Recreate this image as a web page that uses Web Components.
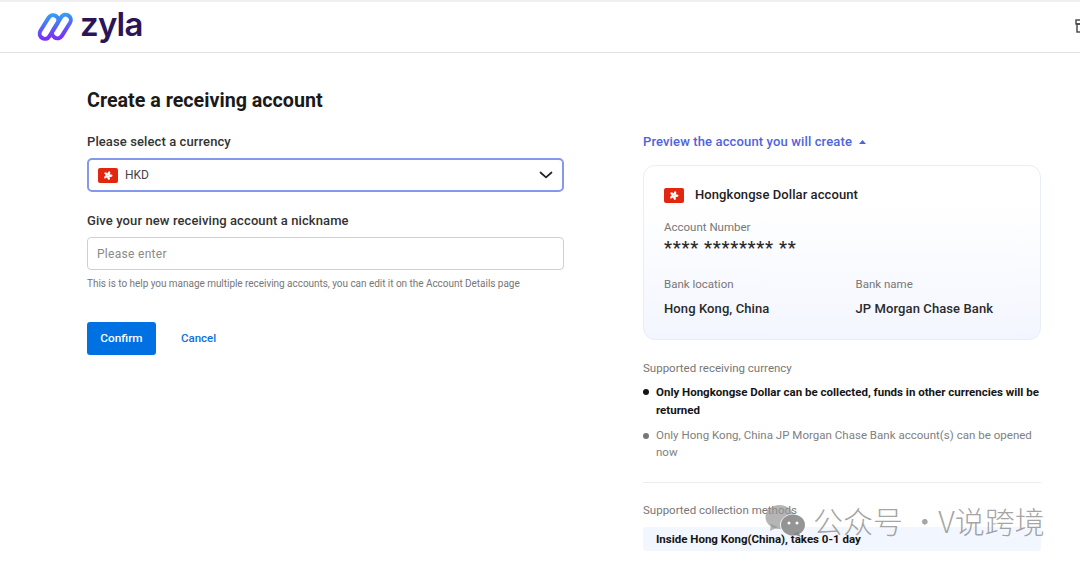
<!DOCTYPE html>
<html lang="en">
<head>
<meta charset="utf-8">
<title>Create a receiving account</title>
<style>
  html, body { margin: 0; height: 564px; overflow: hidden; background: #fff; }
  body { font-family: Roboto, "Liberation Sans", sans-serif; color: #1a1a1a; }
</style>
</head>
<body>
<zyla-page>
  <zyla-header slot="header"></zyla-header>
  <create-form slot="left"></create-form>
  <account-preview slot="right"></account-preview>
</zyla-page>
<wx-mark></wx-mark>

<script>
const flagSvg = `
  <svg width="20" height="15" viewBox="0 0 20 15" style="display:block">
    <rect width="20" height="15" rx="2" fill="#e3260f"/>
    <g fill="#fff" transform="translate(10 7.5)">
      <ellipse cx=".5" cy="-2.300" rx="1.250" ry="2.200" transform="rotate(12)"/>
      <ellipse cx=".5" cy="-2.300" rx="1.250" ry="2.200" transform="rotate(84)"/>
      <ellipse cx=".5" cy="-2.300" rx="1.250" ry="2.200" transform="rotate(156)"/>
      <ellipse cx=".5" cy="-2.300" rx="1.250" ry="2.200" transform="rotate(228)"/>
      <ellipse cx=".5" cy="-2.300" rx="1.250" ry="2.200" transform="rotate(300)"/>
    </g>
  </svg>`

class ZylaPage extends HTMLElement {
  constructor () {
    super()
    this.attachShadow({ mode: 'open' })
  }

  connectedCallback () {
    this.shadowRoot.innerHTML = `
      <style>
      :host { display: block; }
      main {
        display: grid;
        grid-template-columns: 477px 398px;
        column-gap: 79px;
        padding: 0 0 0 87px;
      }
      </style>
      <slot name="header"></slot>
      <main>
        <slot name="left"></slot>
        <slot name="right"></slot>
      </main>
      `
  }
}
window.customElements.define('zyla-page', ZylaPage)

class ZylaHeader extends HTMLElement {
  constructor () {
    super()
    this.attachShadow({ mode: 'open' })
  }

  connectedCallback () {
    this.shadowRoot.innerHTML = `
      <style>
      :host {
        display: flex;
        align-items: center;
        box-sizing: border-box;
        height: 53px;
        padding: 0 0 0 37px;
        border-top: 2px solid #efefef;
        border-bottom: 1px solid #e2e2e2;
        position: relative;
        overflow: hidden;
      }
      .word {
        font: 600 33px/1 Inter, sans-serif;
        color: #2a1559;
        letter-spacing: -0.8px;
        margin: -5px 0 0 6px;
      }
      .logo { display: block; }
      .box { position: absolute; left: 1075px; top: 16px; }
      </style>
      <svg class="logo" width="37" height="30" viewBox="0 0 37 30" fill="none">
        <defs>
          <linearGradient id="lg" x1="3" y1="29" x2="34" y2="1" gradientUnits="userSpaceOnUse">
            <stop offset="0" stop-color="#8a1cf5"/>
            <stop offset=".3" stop-color="#6a48f6"/>
            <stop offset=".62" stop-color="#3a8ff6"/>
            <stop offset="1" stop-color="#1fe0f8"/>
          </linearGradient>
        </defs>
        <g stroke="url(#lg)" stroke-width="4">
          <rect x="-13" y="-5.250" width="26" height="10.500" rx="5.250" transform="translate(12 15) rotate(-58)"/>
          <rect x="-13" y="-5.250" width="26" height="10.500" rx="5.250" transform="translate(24.500 14.500) rotate(-58)"/>
        </g>
      </svg>
      <span class="word">zyla</span>
      <svg class="box" width="10" height="16" viewBox="0 0 10 16" fill="none" stroke="#444" stroke-width="1.400">
        <rect x="1" y="2" width="12" height="4"/>
        <rect x="2" y="6" width="10" height="8"/>
      </svg>
      `
  }
}
window.customElements.define('zyla-header', ZylaHeader)

class CreateForm extends HTMLElement {
  constructor () {
    super()
    this.attachShadow({ mode: 'open' })
  }

  connectedCallback () {
    this.shadowRoot.innerHTML = `
      <style>
      :host { display: block; padding-top: 36px; }
      h1 {
        margin: 0 0 20px;
        font: 700 19.700px/24px Roboto, sans-serif;
        color: #1a1a1a;
      }
      label {
        display: block;
        font: 500 13px/18px Roboto, sans-serif;
        color: #333;
        letter-spacing: .1px;
      }
      .select {
        display: flex;
        align-items: center;
        gap: 7px;
        box-sizing: border-box;
        height: 34px;
        margin: 7px 0 20px;
        padding: 0 9px;
        border: 2px solid #8499ee;
        border-radius: 5px;
        font: 400 12px Roboto, sans-serif;
        color: #444;
      }
      .select span { flex: 1; }
      .input {
        box-sizing: border-box;
        height: 33px;
        margin-top: 7px;
        padding: 0 9px;
        display: flex;
        align-items: center;
        border: 1px solid #d0d0d0;
        border-radius: 4px;
        font: 400 12px Roboto, sans-serif;
        letter-spacing: .3px;
        color: #8a8a8a;
      }
      .hint {
        margin: 7px 0 32px;
        font: 400 10px/13px Roboto, sans-serif;
        color: #777;
        letter-spacing: -.04px;
      }
      .actions { display: flex; align-items: center; gap: 25px; }
      .confirm {
        box-sizing: border-box;
        width: 69px;
        height: 33px;
        padding-bottom: 1px;
        display: flex;
        align-items: center;
        justify-content: center;
        background: #0071e3;
        border-radius: 3px;
        color: #fff;
        font: 500 11.800px Roboto, sans-serif;
      }
      .cancel { font: 500 11.500px Roboto, sans-serif; color: #0f6fde; margin-top: -1px; }
      </style>
      <h1>Create a receiving account</h1>
      <label>Please select a currency</label>
      <div class="select">
        ${flagSvg}
        <span>HKD</span>
        <svg width="14" height="8" viewBox="0 0 14 8" fill="none" stroke="#222" stroke-width="1.700" stroke-linecap="round" stroke-linejoin="round"><path d="M1.500 1.500 L7 6.300 L12.500 1.500"/></svg>
      </div>
      <label>Give your new receiving account a nickname</label>
      <div class="input">Please enter</div>
      <div class="hint">This is to help you manage multiple receiving accounts, you can edit it on the Account Details page</div>
      <div class="actions">
        <div class="confirm">Confirm</div>
        <div class="cancel">Cancel</div>
      </div>
      `
  }
}
window.customElements.define('create-form', CreateForm)

class AccountPreview extends HTMLElement {
  constructor () {
    super()
    this.attachShadow({ mode: 'open' })
  }

  connectedCallback () {
    this.shadowRoot.innerHTML = `
      <style>
      :host { display: block; padding-top: 80px; font-family: Roboto, sans-serif; }
      .toggle {
        display: flex;
        align-items: center;
        gap: 7px;
        font: 500 13px/18px Roboto, sans-serif;
        color: #4f63de;
        letter-spacing: .13px;
        margin-bottom: 14px;
      }
      .card {
        box-sizing: border-box;
        height: 175px;
        padding: 20px 20px 0;
        border: 1px solid #e9edf5;
        border-radius: 12px;
        background: linear-gradient(180deg, #fff 20%, #f3f6fe 100%);
      }
      .title {
        display: flex;
        align-items: center;
        gap: 11px;
        font: 500 13px/18px Roboto, sans-serif;
        color: #222;
        letter-spacing: .08px;
        margin-bottom: 15px;
      }
      .lbl { font: 400 11.500px/16px Roboto, sans-serif; color: #777; }
      .num {
        font: 500 18px/18px Roboto, sans-serif;
        color: #2a2a2a;
        margin: 4px 0 19px;
        letter-spacing: .73px;
        height: 18px;
      }
      .cols { display: grid; grid-template-columns: 191.500px 1fr; }
      .val {
        font: 500 13px/18px Roboto, sans-serif;
        color: #2a2a2a;
        margin-top: 8px;
        letter-spacing: .1px;
      }
      .head { font: 400 11.500px/16px Roboto, sans-serif; color: #777; margin-top: 20px; }
      ul { list-style: none; margin: 7px 0 0; padding: 0; }
      li {
        position: relative;
        padding-left: 13px;
        font: 400 11.500px/17px Roboto, sans-serif;
        letter-spacing: .02px;
        color: #808080;
        margin-bottom: 7px;
      }
      li::before {
        content: "";
        position: absolute;
        left: 0;
        top: 6px;
        width: 6px;
        height: 6px;
        border-radius: 50%;
        background: #777;
      }
      li.on { font-weight: 700; line-height: 18px; color: #151515; letter-spacing: 0; margin-bottom: 8px; }
      li.on::before { background: #151515; }
      hr { border: 0; border-top: 1px solid #ececec; margin: 21px 0 0; }
      hr + .head { margin-top: 19px; }
      .chip {
        margin-top: 9px;
        height: 24px;
        display: flex;
        align-items: center;
        padding-left: 13px;
        background: #f2f6fe;
        border-radius: 3px;
        font: 700 11.500px Roboto, sans-serif;
        color: #151515;
      }
      </style>
      <div class="toggle">Preview the account you will create
        <svg width="7" height="4" viewBox="0 0 7 4"><path d="M3.500 0 L7 4 L0 4 Z" fill="#4f63de"/></svg>
      </div>
      <div class="card">
        <div class="title">${flagSvg}<span>Hongkongse Dollar account</span></div>
        <div class="lbl">Account Number</div>
        <div class="num">**** ******** **</div>
        <div class="cols">
          <div><div class="lbl">Bank location</div><div class="val">Hong Kong, China</div></div>
          <div><div class="lbl">Bank name</div><div class="val">JP Morgan Chase Bank</div></div>
        </div>
      </div>
      <div class="head">Supported receiving currency</div>
      <ul>
        <li class="on">Only Hongkongse Dollar can be collected, funds in other currencies will be returned</li>
        <li>Only Hong Kong, China JP Morgan Chase Bank account(s) can be opened now</li>
      </ul>
      <hr>
      <div class="head">Supported collection methods</div>
      <div class="chip">Inside Hong Kong(China), takes 0-1 day</div>
      `
  }
}
window.customElements.define('account-preview', AccountPreview)

class WxMark extends HTMLElement {
  constructor () {
    super()
    this.attachShadow({ mode: 'open' })
  }

  connectedCallback () {
    this.shadowRoot.innerHTML = `
      <style>
      :host {
        position: absolute;
        left: 765px;
        top: 502px;
        display: flex;
        align-items: center;
        gap: 6px;
        height: 36px;
        white-space: nowrap;
        font: 300 30px/36px "Noto Sans CJK SC", sans-serif;
        color: rgba(130, 130, 130, .72);
      }
      svg { display: block; }
      .tail { margin-left: -8px; }
      </style>
      <svg width="42" height="33" viewBox="0 0 42 33">
        <ellipse cx="14.500" cy="13" rx="14" ry="12" fill="rgba(150,150,150,.7)"/>
        <path d="M6 20 L5 27 L13 23 Z" fill="rgba(150,150,150,.7)"/>
        <ellipse cx="28" cy="21" rx="13" ry="11" fill="rgba(255,255,255,.8)"/>
        <ellipse cx="28" cy="21" rx="12" ry="10.500" fill="rgba(130,130,130,.85)"/>
        <path d="M33 28 L36 33 L28 30 Z" fill="rgba(130,130,130,.85)"/>
        <circle cx="24" cy="19" r="1.500" fill="#fff"/>
        <circle cx="32" cy="19" r="1.500" fill="#fff"/>
      </svg>
      <span>公众号 · <span class="tail">V说跨境</span></span>
      `
  }
}
window.customElements.define('wx-mark', WxMark)
</script>
</body>
</html>
